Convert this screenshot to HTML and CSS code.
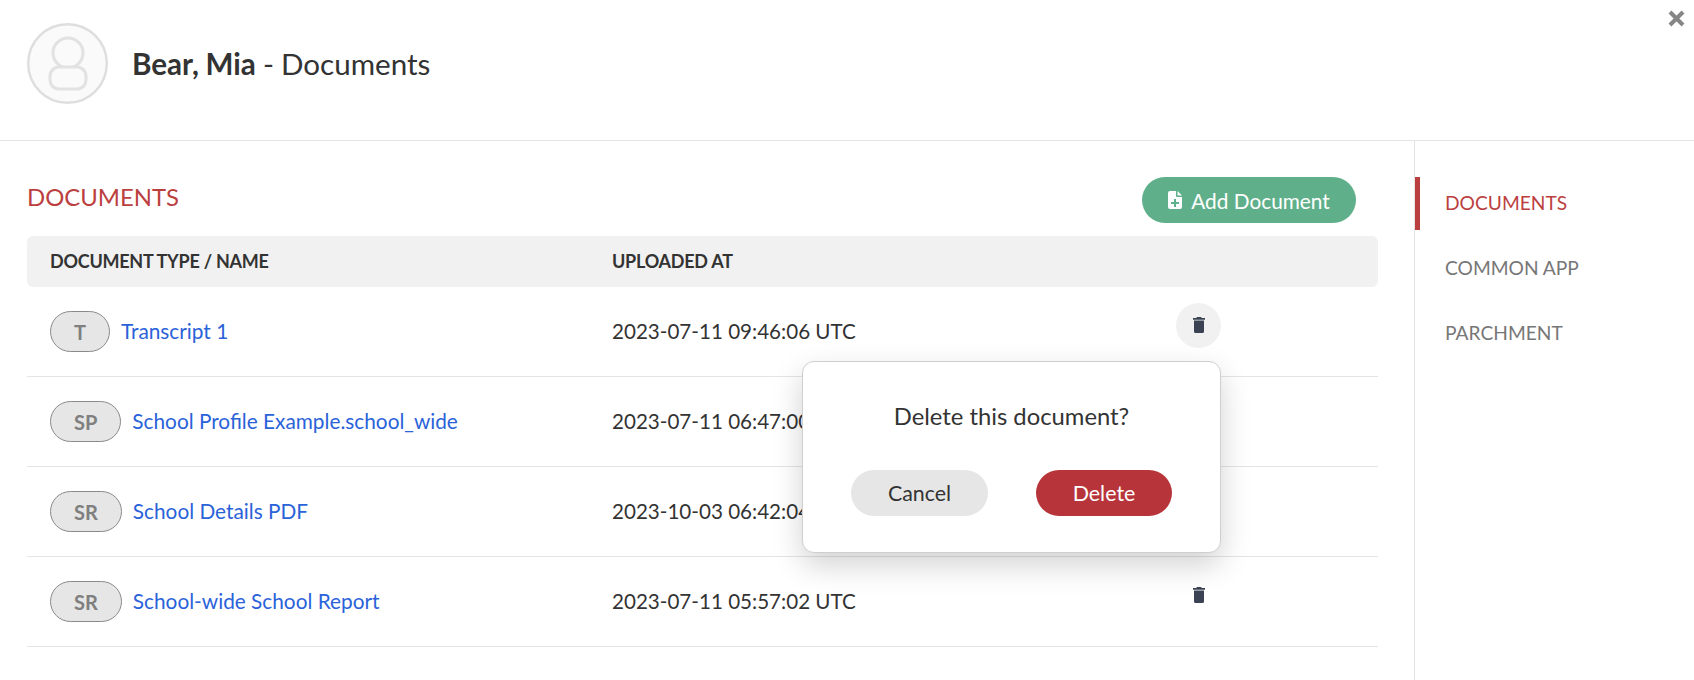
FILE: index.html
```html
<!DOCTYPE html>
<html lang="en">
<head>
<meta charset="utf-8">
<title>Bear, Mia - Documents</title>
<link rel="stylesheet" href="styles.css">
</head>
<body>
<div class="page">
  <header class="top">
    <svg class="avatar" viewBox="0 0 81 81" aria-hidden="true">
      <circle cx="40.5" cy="40.5" r="39.300" fill="#fafafa" stroke="#dedede" stroke-width="2.400"/>
      <circle cx="41" cy="30" r="15" fill="none" stroke="#e2e2e2" stroke-width="3"/>
      <rect x="23" y="44" width="36" height="22" rx="9" fill="#fafafa" stroke="#e2e2e2" stroke-width="3"/>
    </svg>
    <h1 class="title"><strong>Bear, Mia</strong> - Documents</h1>
    <svg class="close" viewBox="0 0 16 16" aria-hidden="true"><path d="M2.500 2.500l11 11M13.500 2.500l-11 11" stroke="#868686" stroke-width="3.400" fill="none"/></svg>
  </header>
  <div class="body">
    <main class="content">
      <div class="heading">
        <h2 class="section">DOCUMENTS</h2>
        <button class="add">
          <svg class="add-icon" viewBox="0 0 14 18" aria-hidden="true"><path fill="#fff" fill-rule="evenodd" d="M2 0h6v5a1 1 0 0 0 1 1h5v10a2 2 0 0 1-2 2H2a2 2 0 0 1-2-2V2a2 2 0 0 1 2-2zM6 8v3H3v2h3v3h2v-3h3v-2H8V8z"/><path fill="#fff" d="M9.500 0L14 4.500H9.500z"/></svg>
          Add Document
        </button>
      </div>
      <div class="thead">
        <span>DOCUMENT TYPE / NAME</span>
        <span>UPLOADED AT</span>
      </div>
      <div class="row">
        <div class="name"><span class="pill">T</span><a class="link">Transcript 1</a></div>
        <div class="date">2023-07-11 09:46:06 UTC</div>
        <div class="actions"><span class="trash active"><svg class="trash-icon" viewBox="0 0 12 16" aria-hidden="true"><path fill="#3b4254" d="M4 0h4l.8 1H12v1.800H0V1h3.200zM1 3.500h10V14.500A1.500 1.500 0 0 1 9.500 16h-7A1.500 1.500 0 0 1 1 14.500z"/></svg></span></div>
      </div>
      <div class="row">
        <div class="name"><span class="pill">SP</span><a class="link">School Profile Example.school_wide</a></div>
        <div class="date">2023-07-11 06:47:00 UTC</div>
        <div class="actions"></div>
      </div>
      <div class="row">
        <div class="name"><span class="pill">SR</span><a class="link">School Details PDF</a></div>
        <div class="date">2023-10-03 06:42:04 UTC</div>
        <div class="actions"></div>
      </div>
      <div class="row">
        <div class="name"><span class="pill">SR</span><a class="link">School-wide School Report</a></div>
        <div class="date">2023-07-11 05:57:02 UTC</div>
        <div class="actions"><span class="trash"><svg class="trash-icon" viewBox="0 0 12 16" aria-hidden="true"><path fill="#3b4254" d="M4 0h4l.8 1H12v1.800H0V1h3.200zM1 3.500h10V14.500A1.500 1.500 0 0 1 9.500 16h-7A1.500 1.500 0 0 1 1 14.500z"/></svg></span></div>
      </div>
      <div class="popover">
        <p class="question">Delete this document?</p>
        <div class="choices">
          <button class="btn cancel">Cancel</button>
          <button class="btn delete">Delete</button>
        </div>
      </div>
    </main>
    <nav class="side">
      <a class="tab current">DOCUMENTS</a>
      <a class="tab">COMMON APP</a>
      <a class="tab">PARCHMENT</a>
    </nav>
  </div>
</div>
</body>
</html>
```
FILE: styles.css
```css
* { box-sizing: border-box; }
html, body { margin: 0; height: 100%; background: #fff; overflow: hidden; }
body { font-family: Lato, "Liberation Sans", sans-serif; color: #333; }
.page { width: 1694px; height: 680px; display: flex; flex-direction: column; }

.top { position: relative; height: 141px; flex: none; display: flex; align-items: center; padding: 0 0 13px 27px; border-bottom: 1px solid #e4e4e4; }
.avatar { width: 81px; height: 81px; flex: none; margin-right: 24px; }
.title { margin: 0; font-size: 29.6px; font-weight: 400; color: #333; line-height: 36px; word-spacing: -0.5px; }
.title strong { font-weight: 700; }
.close { position: absolute; right: 8px; top: 9px; width: 19px; height: 19px; }

.body { flex: 1; display: flex; min-height: 0; }
.content { position: relative; width: 1415px; flex: none; padding: 36px 36px 0 27px; border-right: 1px solid #e4e4e4; }
.heading { display: flex; justify-content: space-between; align-items: center; height: 46px; padding-right: 22px; margin-bottom: 13px; }
.section { margin: 0; padding-bottom: 6px; font-size: 23.9px; line-height: 30px; font-weight: 400; color: #bc3f3f; }
.add { display: flex; align-items: center; justify-content: center; gap: 9px; width: 214px; height: 46px; border: 0; border-radius: 23px; background: #5fb08a; color: #fff; font: 400 20.8px Lato, sans-serif; }
.add-icon { width: 14px; height: 18px; }

.thead { display: grid; grid-template-columns: 562px 1fr; align-items: center; height: 51px; padding: 0 0 2px 23px; background: #f1f1f1; border-radius: 6px; font-size: 18px; letter-spacing: -0.25px; font-weight: 700; color: #333; }

.row { display: grid; grid-template-columns: 562px 572px 1fr; align-items: center; height: 90px; padding: 0 0 2px 23px; border-bottom: 1px solid #e4e4e4; }
.name { display: flex; align-items: center; gap: 11px; }
.pill { display: flex; align-items: center; justify-content: center; min-width: 60px; height: 41px; margin-top: 2px; padding: 0 23px; border: 1px solid #8a8a8a; border-radius: 21px; background: #e6e6e6; color: #7f7f7f; font-size: 20px; font-weight: 700; }
.link { color: #2a62d9; font-size: 20.8px; }
.date { font-size: 20.6px; color: #333; }
.actions { display: flex; justify-content: flex-start; padding-bottom: 11px; }
.trash { display: flex; align-items: center; justify-content: center; width: 45px; height: 45px; margin-left: -8px; border-radius: 50%; }
.trash.active { background: #f1f1f1; }
.trash-icon { width: 12px; height: 16px; }

.popover { position: absolute; left: 802px; top: 220px; width: 419px; height: 192px; background: #fff; border: 1px solid #cfcfcf; border-radius: 12px; box-shadow: 0 12px 30px rgba(0,0,0,.18); display: flex; flex-direction: column; align-items: center; }
.question { margin: 39px 0 0; font-size: 23.8px; line-height: 30px; color: #333; }
.choices { display: flex; gap: 48px; margin-top: 39px; }
.btn { width: 137px; height: 46px; border: 0; border-radius: 23px; font: 400 21.4px Lato, sans-serif; }
.cancel { background: #e6e6e6; color: #333; }
.delete { width: 136px; background: #b7353a; color: #fff; }

.side { flex: 1; display: flex; flex-direction: column; padding-top: 36px; }
.tab { display: flex; align-items: center; height: 53px; margin-bottom: 12px; padding: 0 0 3px 25px; font-size: 19.2px; color: #777; border-left: 5px solid transparent; }
.tab.current { color: #bc3f3f; border-left-color: #bc3f3f; }
```
